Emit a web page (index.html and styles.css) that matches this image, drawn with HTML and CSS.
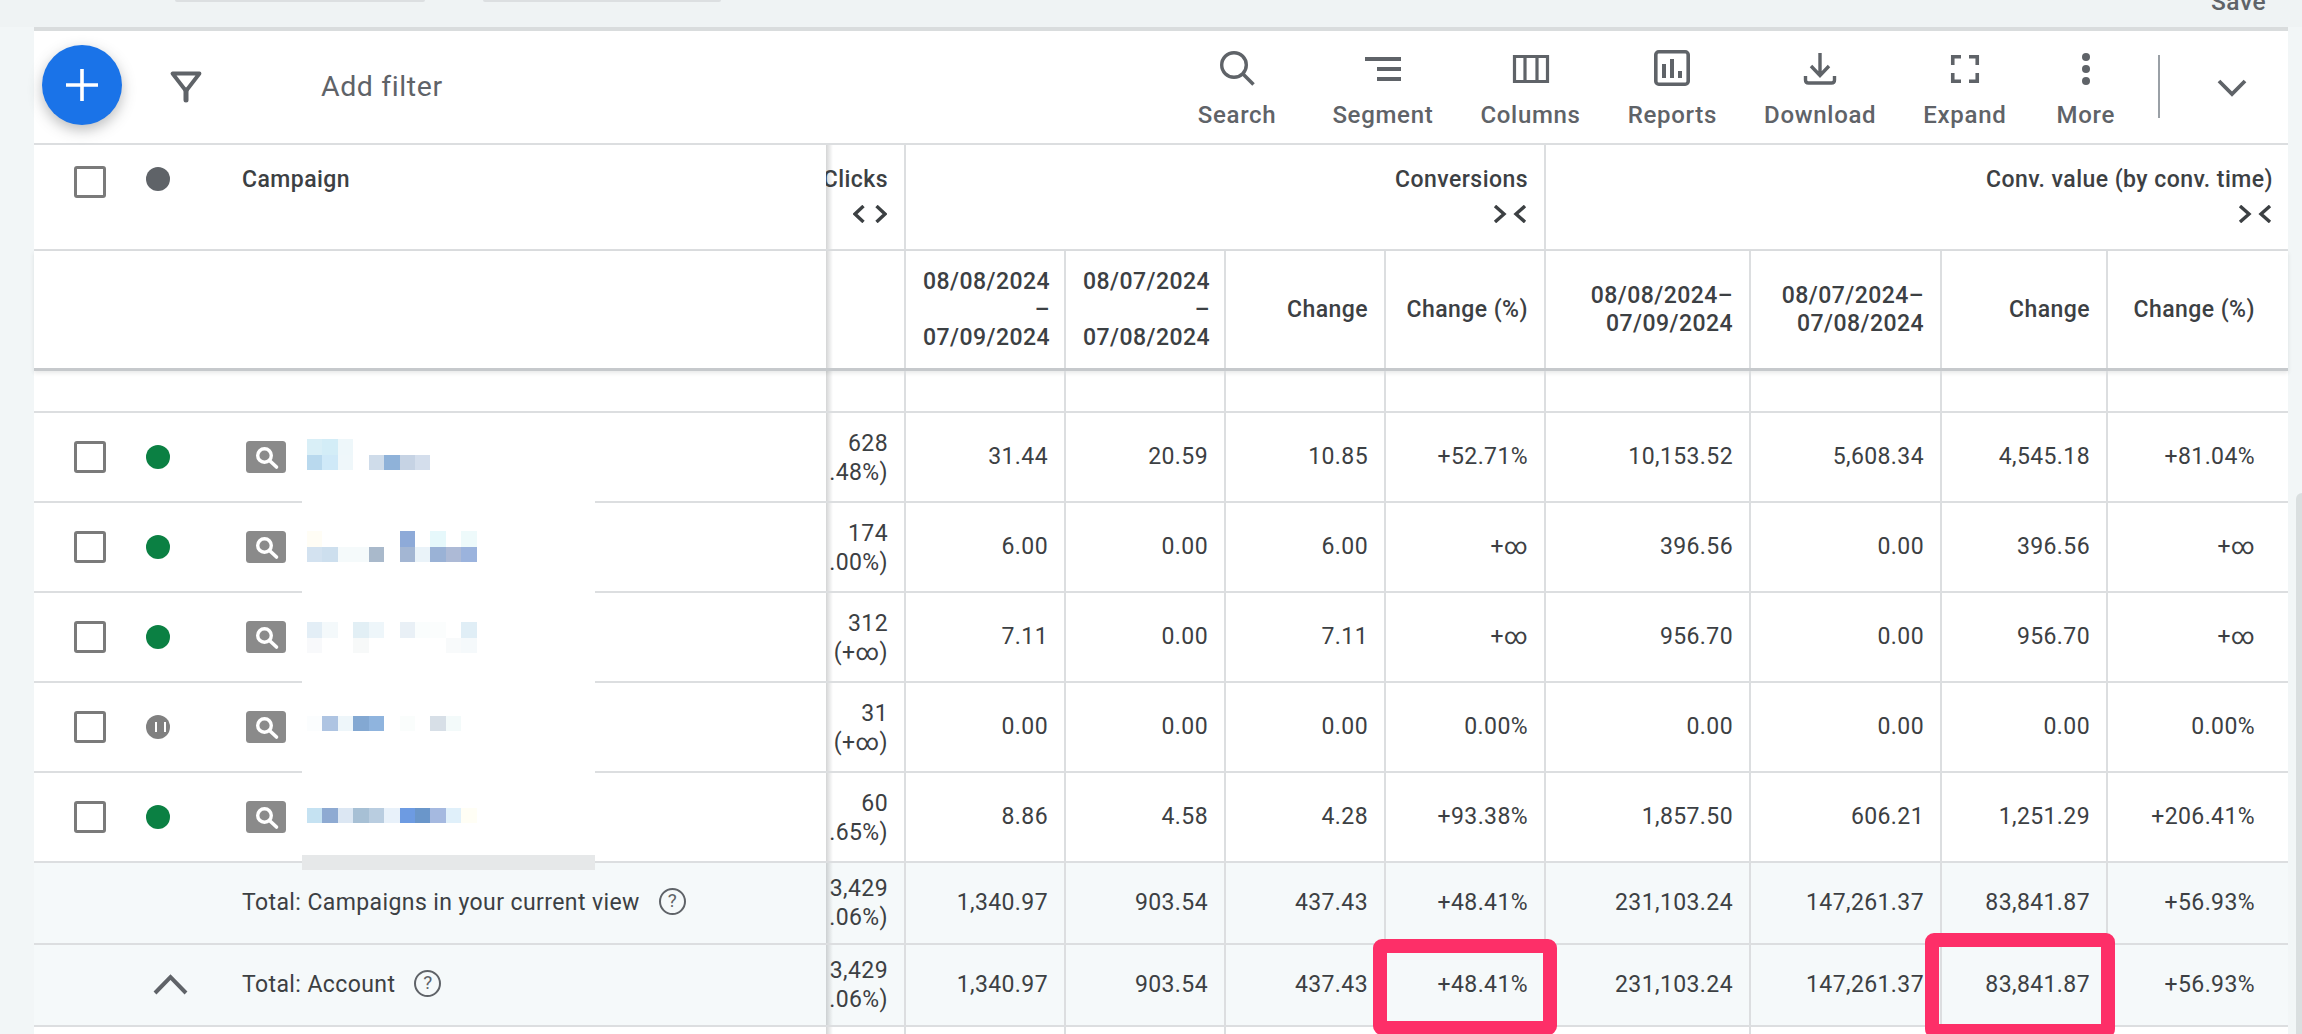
FILE: index.html
```html
<!DOCTYPE html>
<html lang="en">
<head>
<meta charset="utf-8">
<title>Campaigns</title>
<link rel="stylesheet" href="styles.css">
</head>
<body>
<svg class="sprite" width="0" height="0" aria-hidden="true">
  <symbol id="badge" viewBox="0 0 40 32">
    <rect width="40" height="32" rx="3.5" fill="#8a8a8a"/>
    <circle cx="18.5" cy="14.5" r="6.8" fill="none" stroke="#fff" stroke-width="3.4"/>
    <path d="M23.5 19.5l7 6.5" stroke="#fff" stroke-width="3.6" stroke-linecap="round" fill="none"/>
  </symbol>
  <symbol id="up" viewBox="0 0 48 24">
    <path d="M9 20L24.500 4 40 20" fill="none" stroke="#5f6368" stroke-width="4"/>
  </symbol>
</svg>

<header class="topstrip">
  <span class="chip chip-a"></span>
  <span class="chip chip-b"></span>
  <span class="save">Save</span>
</header>

<main class="card">
  <div class="toolbar">
    <button class="fab" type="button" aria-label="Add">
      <svg width="40" height="40" viewBox="0 0 40 40"><path d="M20 4v32M4 20h32" stroke="#fff" stroke-width="3.600" fill="none"/></svg>
    </button>
    <svg class="filter" width="48" height="48" viewBox="0 0 48 48"><path d="M10.500 11.500H37.500L24 29Z" fill="none" stroke="#5f6368" stroke-width="3.800" stroke-linejoin="round"/><path d="M24 28v10" stroke="#5f6368" stroke-width="5" stroke-linecap="round"/></svg>
    <span class="addfilter">Add filter</span>
    <nav class="tools">
      <div class="tool">
        <svg width="48" height="48" viewBox="0 0 48 48"><circle cx="21" cy="21" r="12.300" fill="none" stroke="#5f6368" stroke-width="3.400"/><path d="M30 30l10.500 10.500" stroke="#5f6368" stroke-width="3.600" fill="none"/></svg>
        <span>Search</span>
      </div>
      <div class="tool">
        <svg width="48" height="48" viewBox="0 0 48 48"><path d="M6 13h36v4H6zM18 23h24v4H18zM18 33h24v4H18z" fill="#5f6368"/></svg>
        <span>Segment</span>
      </div>
      <div class="tool">
        <svg width="48" height="48" viewBox="0 0 48 48"><path d="M7.500 12.500h33v25h-33zM18 12.500v25M30 12.500v25" fill="none" stroke="#5f6368" stroke-width="3.200"/></svg>
        <span>Columns</span>
      </div>
      <div class="tool">
        <svg width="48" height="48" viewBox="0 0 48 48"><rect x="7.800" y="7.800" width="32.400" height="32.400" rx="3" fill="none" stroke="#5f6368" stroke-width="3.600"/><path d="M14 20h4v14h-4zM22 15h4v19h-4zM30 27h4v7h-4z" fill="#5f6368"/></svg>
        <span>Reports</span>
      </div>
      <div class="tool">
        <svg width="48" height="48" viewBox="0 0 48 48"><path d="M24 9v22M15 22l9 9.500 9-9.500" fill="none" stroke="#5f6368" stroke-width="3.400"/><path d="M9.500 32v4q0 3 3 3h23q3 0 3-3v-4" fill="none" stroke="#5f6368" stroke-width="3.400"/></svg>
        <span>Download</span>
      </div>
      <div class="tool">
        <svg width="48" height="48" viewBox="0 0 48 48"><path d="M11.750 21v-8.250H20M28 12.750h8.250V21M36.250 29v8.250H28M20 37.250h-8.250V29" fill="none" stroke="#5f6368" stroke-width="3.600"/></svg>
        <span>Expand</span>
      </div>
      <div class="tool">
        <svg width="48" height="48" viewBox="0 0 48 48"><circle cx="24" cy="13" r="4" fill="#5f6368"/><circle cx="24" cy="25" r="4" fill="#5f6368"/><circle cx="24" cy="37" r="4" fill="#5f6368"/></svg>
        <span>More</span>
      </div>
    </nav>
    <span class="divider"></span>
    <svg class="chev" width="48" height="24" viewBox="0 0 48 24"><path d="M11 4l13 13L37 4" fill="none" stroke="#5f6368" stroke-width="3.800"/></svg>
  </div>

  <div class="row head1">
    <div class="st st-head">
      <span class="box"></span>
      <span class="dot dot-dark"></span>
      <span class="camp">Campaign</span>
    </div>
    <div class="c hcol"><span>Clicks</span>
      <svg width="34" height="18" viewBox="0 0 34 18"><path d="M10.500 1L2 9l8.500 8M23.500 1L32 9l-8.500 8" fill="none" stroke="#3c4043" stroke-width="3.400"/></svg>
    </div>
    <div class="c hcol span4"><span>Conversions</span>
      <svg width="34" height="18" viewBox="0 0 34 18"><path d="M2 1l9 8-9 8M32 1l-9 8 9 8" fill="none" stroke="#3c4043" stroke-width="3.400"/></svg>
    </div>
    <div class="c hcol span4 last"><span>Conv. value (by conv. time)</span>
      <svg width="34" height="18" viewBox="0 0 34 18"><path d="M2 1l9 8-9 8M32 1l-9 8 9 8" fill="none" stroke="#3c4043" stroke-width="3.400"/></svg>
    </div>
  </div>

  <div class="row head2">
    <div class="st"></div>
    <div class="c"></div>
    <div class="c hd-date">08/08/2024<br>–<br>07/09/2024</div>
    <div class="c hd-date">08/07/2024<br>–<br>07/08/2024</div>
    <div class="c">Change</div>
    <div class="c">Change (%)</div>
    <div class="c">08/08/2024–<br>07/09/2024</div>
    <div class="c">08/07/2024–<br>07/08/2024</div>
    <div class="c">Change</div>
    <div class="c last">Change (%)</div>
  </div>

  <div class="row blank">
    <div class="st"></div><div class="c"></div><div class="c"></div><div class="c"></div><div class="c"></div><div class="c"></div><div class="c"></div><div class="c"></div><div class="c"></div><div class="c last"></div>
  </div>

  <div class="row data">
    <div class="st">
      <span class="box"></span><span class="dot dot-on"></span>
      <svg class="badge" width="40" height="32"><use href="#badge"/></svg>
      <svg class="nm nm1" width="185" height="31" viewBox="0 0 12 2" preserveAspectRatio="none" shape-rendering="crispEdges">
        <rect x="0" y="0" width="1" height="1" fill="#d9eff7"/><rect x="1" y="0" width="1" height="1" fill="#d3edf7"/><rect x="2" y="0" width="1" height="1" fill="#eef7fa"/>
        <rect x="0" y="1" width="1" height="1" fill="#b9d9ee"/><rect x="1" y="1" width="1" height="1" fill="#cfe9f8"/><rect x="2" y="1" width="1" height="1" fill="#eff7fa"/><rect x="4" y="1" width="1" height="1" fill="#cfdcea"/><rect x="5" y="1" width="1" height="1" fill="#8fb2d9"/><rect x="6" y="1" width="1" height="1" fill="#c6d3e4"/><rect x="7" y="1" width="1" height="1" fill="#d4deec"/>
      </svg>
    </div>
    <div class="c two"><span>628</span><span>.48%)</span></div>
    <div class="c">31.44</div><div class="c">20.59</div><div class="c">10.85</div><div class="c">+52.71%</div>
    <div class="c">10,153.52</div><div class="c">5,608.34</div><div class="c">4,545.18</div><div class="c last">+81.04%</div>
  </div>

  <div class="row data">
    <div class="st">
      <span class="box"></span><span class="dot dot-on"></span>
      <svg class="badge" width="40" height="32"><use href="#badge"/></svg>
      <svg class="nm nm2" width="185" height="31" viewBox="0 0 12 2" preserveAspectRatio="none" shape-rendering="crispEdges">
        <rect x="0" y="0" width="1" height="1" fill="#fffdf5"/><rect x="6" y="0" width="1" height="1" fill="#8eaad8"/><rect x="8" y="0" width="1" height="1" fill="#e6f8fb"/><rect x="10" y="0" width="1" height="1" fill="#eefafb"/>
        <rect x="0" y="1" width="1" height="1" fill="#d3e2f0"/><rect x="1" y="1" width="1" height="1" fill="#cddfee"/><rect x="2" y="1" width="1" height="1" fill="#f5fafb"/><rect x="3" y="1" width="1" height="1" fill="#f5fafb"/><rect x="4" y="1" width="1" height="1" fill="#a9b9cb"/><rect x="6" y="1" width="1" height="1" fill="#a3b6d3"/><rect x="7" y="1" width="1" height="1" fill="#eaf3f9"/><rect x="8" y="1" width="1" height="1" fill="#9ab2d6"/><rect x="9" y="1" width="1" height="1" fill="#adbad6"/><rect x="10" y="1" width="1" height="1" fill="#9bb3dd"/>
      </svg>
    </div>
    <div class="c two"><span>174</span><span>.00%)</span></div>
    <div class="c">6.00</div><div class="c">0.00</div><div class="c">6.00</div><div class="c">+∞</div>
    <div class="c">396.56</div><div class="c">0.00</div><div class="c">396.56</div><div class="c last">+∞</div>
  </div>

  <div class="row data">
    <div class="st">
      <span class="box"></span><span class="dot dot-on"></span>
      <svg class="badge" width="40" height="32"><use href="#badge"/></svg>
      <svg class="nm nm3" width="185" height="31" viewBox="0 0 12 2" preserveAspectRatio="none" shape-rendering="crispEdges">
        <rect x="0" y="0" width="1" height="1" fill="#e3eef6"/><rect x="1" y="0" width="1" height="1" fill="#f4f9fb"/><rect x="3" y="0" width="1" height="1" fill="#e2eff5"/><rect x="4" y="0" width="1" height="1" fill="#eef6fa"/><rect x="6" y="0" width="1" height="1" fill="#e9f0f6"/><rect x="7" y="0" width="1" height="1" fill="#fafdfd"/><rect x="8" y="0" width="1" height="1" fill="#fbfdfd"/><rect x="10" y="0" width="1" height="1" fill="#e0eef6"/>
        <rect x="0" y="1" width="1" height="1" fill="#f8f9fb"/><rect x="3" y="1" width="1" height="1" fill="#f7f9f9"/><rect x="9" y="1" width="1" height="1" fill="#f8fafb"/><rect x="10" y="1" width="1" height="1" fill="#f5f9fb"/>
      </svg>
    </div>
    <div class="c two"><span>312</span><span>(+∞)</span></div>
    <div class="c">7.11</div><div class="c">0.00</div><div class="c">7.11</div><div class="c">+∞</div>
    <div class="c">956.70</div><div class="c">0.00</div><div class="c">956.70</div><div class="c last">+∞</div>
  </div>

  <div class="row data">
    <div class="st">
      <span class="box"></span><span class="dot dot-pause"></span>
      <svg class="badge" width="40" height="32"><use href="#badge"/></svg>
      <svg class="nm nm4" width="185" height="15" viewBox="0 0 12 1" preserveAspectRatio="none" shape-rendering="crispEdges">
        <rect x="0" y="0" width="1" height="1" fill="#fbfdfe"/><rect x="1" y="0" width="1" height="1" fill="#aec4e2"/><rect x="2" y="0" width="1" height="1" fill="#eef6fa"/><rect x="3" y="0" width="1" height="1" fill="#83a8d2"/><rect x="4" y="0" width="1" height="1" fill="#8fb4de"/><rect x="6" y="0" width="1" height="1" fill="#fafdfc"/><rect x="8" y="0" width="1" height="1" fill="#d7dfe7"/><rect x="9" y="0" width="1" height="1" fill="#f3fafa"/>
      </svg>
    </div>
    <div class="c two"><span>31</span><span>(+∞)</span></div>
    <div class="c">0.00</div><div class="c">0.00</div><div class="c">0.00</div><div class="c">0.00%</div>
    <div class="c">0.00</div><div class="c">0.00</div><div class="c">0.00</div><div class="c last">0.00%</div>
  </div>

  <div class="row data">
    <div class="st">
      <span class="box"></span><span class="dot dot-on"></span>
      <svg class="badge" width="40" height="32"><use href="#badge"/></svg>
      <svg class="nm nm5" width="185" height="15" viewBox="0 0 12 1" preserveAspectRatio="none" shape-rendering="crispEdges">
        <rect x="0" y="0" width="1" height="1" fill="#c5e2f2"/><rect x="1" y="0" width="1" height="1" fill="#8eaad2"/><rect x="2" y="0" width="1" height="1" fill="#dce7f3"/><rect x="3" y="0" width="1" height="1" fill="#a7c0d5"/><rect x="4" y="0" width="1" height="1" fill="#b9cde0"/><rect x="5" y="0" width="1" height="1" fill="#e8f1fa"/><rect x="6" y="0" width="1" height="1" fill="#6d9be2"/><rect x="7" y="0" width="1" height="1" fill="#6a96ca"/><rect x="8" y="0" width="1" height="1" fill="#a5b9e0"/><rect x="9" y="0" width="1" height="1" fill="#e0f0fa"/><rect x="10" y="0" width="1" height="1" fill="#fffef5"/>
      </svg>
    </div>
    <div class="c two"><span>60</span><span>.65%)</span></div>
    <div class="c">8.86</div><div class="c">4.58</div><div class="c">4.28</div><div class="c">+93.38%</div>
    <div class="c">1,857.50</div><div class="c">606.21</div><div class="c">1,251.29</div><div class="c last">+206.41%</div>
  </div>

  <div class="row total">
    <div class="st st-total">
      <span class="slot"></span>
      <span class="tname">Total: Campaigns in your current view</span><span class="help">?</span>
    </div>
    <div class="c two"><span>3,429</span><span>.06%)</span></div>
    <div class="c">1,340.97</div><div class="c">903.54</div><div class="c">437.43</div><div class="c">+48.41%</div>
    <div class="c">231,103.24</div><div class="c">147,261.37</div><div class="c">83,841.87</div><div class="c last">+56.93%</div>
  </div>

  <div class="row total">
    <div class="st st-total">
      <span class="slot"><svg width="48" height="24"><use href="#up"/></svg></span>
      <span class="tname">Total: Account</span><span class="help">?</span>
    </div>
    <div class="c two"><span>3,429</span><span>.06%)</span></div>
    <div class="c">1,340.97</div><div class="c">903.54</div><div class="c">437.43</div><div class="c">+48.41%</div>
    <div class="c">231,103.24</div><div class="c">147,261.37</div><div class="c">83,841.87</div><div class="c last">+56.93%</div>
  </div>

  <div class="row tail">
    <div class="st"></div><div class="c"></div><div class="c"></div><div class="c"></div><div class="c"></div><div class="c"></div><div class="c"></div><div class="c"></div><div class="c"></div><div class="c last"></div>
  </div>

  <div class="mask"></div>
  <div class="maskbar"></div>
</main>

<span class="thumb"></span>
<span class="mark mark-a"></span>
<span class="mark mark-b"></span>
</body>
</html>
```

FILE: styles.css
```css
* { box-sizing: border-box; }
html, body { margin: 0; height: 1034px; overflow: hidden; }
body {
  position: relative;
  background: #f2f6f7;
  font-family: Roboto, "Liberation Sans", sans-serif;
  color: #3c4043;
}
.sprite { position: absolute; }

.topstrip {
  height: 27px;
  background: #eff3f4;
  display: flex;
  align-items: flex-start;
  padding-left: 175px;
  padding-right: 36px;
}
.chip { height: 2px; background: #dcdfe1; border-radius: 0 0 4px 4px; }
.chip-a { width: 250px; }
.chip-b { width: 238px; margin-left: 58px; }
.save {
  margin-left: auto;
  margin-top: -12px;
  font-size: 24.500px;
  line-height: 28px;
  font-weight: 500;
  letter-spacing: .5px;
  color: #5f6368;
}

.card {
  position: relative;
  margin-left: 34px;
  width: 2254px;
  background: #fff;
  border-top: 4px solid #d9dcdd;
}

.toolbar {
  height: 114px;
  border-bottom: 2px solid #dcdee0;
  display: flex;
  align-items: flex-start;
  padding-left: 8px;
  padding-top: 13px;
}
.fab {
  width: 80px;
  height: 80px;
  margin-top: 1px;
  padding: 0;
  border: 0;
  border-radius: 50%;
  background: #1a73e8;
  box-shadow: 0 5px 14px rgba(60, 64, 67, .35);
  display: flex;
  align-items: center;
  justify-content: center;
}
.filter { margin-left: 40px; margin-top: 18px; flex: none; }
.addfilter {
  margin-left: 111px;
  margin-top: 27px;
  font-size: 28.500px;
  line-height: 32px;
  letter-spacing: .6px;
  color: #5f6368;
}
.tools { margin-left: auto; display: flex; gap: 47px; }
.tool {
  display: flex;
  flex-direction: column;
  align-items: center;
  font-size: 24px;
  font-weight: 500;
  letter-spacing: .7px;
  line-height: 28px;
  color: #5f6368;
}
.tool:first-child { margin-right: 9px; }
.tool:last-child { margin-left: 3px; }
.tool svg { display: block; margin-bottom: 9px; }
.divider {
  width: 2px;
  height: 63px;
  margin-top: 11px;
  margin-left: 43px;
  background: #9aa0a6;
}
.chev { margin-left: 48px; margin-top: 33px; margin-right: 32px; flex: none; }

.row {
  display: grid;
  grid-template-columns: 792px 80px 160px 160px 160px 160px 205px 191px 166px 180px;
  border-bottom: 2px solid #dcdee0;
  font-size: 23px;
  letter-spacing: .4px;
  line-height: 28px;
}
.head1 { height: 106px; font-weight: 500; letter-spacing: .45px; }
.head2 {
  height: 120px;
  font-weight: 500;
  letter-spacing: .45px;
  border-bottom: 3px solid #c6c9cc;
  box-shadow: 0 2px 4px rgba(60, 64, 67, .12);
}
.blank { height: 42px; }
.data { height: 90px; }
.total { height: 82px; background: #f5f9fa; }
.tail { height: 20px; border-bottom: 0; }

.st {
  display: flex;
  align-items: center;
  padding-left: 40px;
  position: relative;
}
.st::after {
  content: "";
  position: absolute;
  top: 0;
  bottom: 0;
  right: -7px;
  width: 7px;
  background: linear-gradient(to right, rgba(60, 64, 67, .22), rgba(60, 64, 67, 0));
}
.st-head { align-items: flex-start; padding-top: 21px; }
.st-total { padding-left: 112px; }

.c {
  border-right: 2px solid #dcdee0;
  padding-right: 16px;
  display: flex;
  align-items: center;
  justify-content: flex-end;
  text-align: right;
  overflow: hidden;
  white-space: nowrap;
}
.last { border-right: 0; padding-right: 33px; }
.hd-date { padding-right: 14px; }
.hcol {
  flex-direction: column;
  align-items: flex-end;
  justify-content: flex-start;
  padding-top: 21px;
}
.hcol svg { display: block; margin-top: 11px; margin-right: 1px; }
.hcol.last { padding-right: 15px; }
.span4 { grid-column: span 4; }
.two { flex-direction: column; align-items: flex-end; justify-content: center; line-height: 29px; }
.data .two { padding-top: 2px; }

.box {
  width: 32px;
  height: 32px;
  flex: none;
  border: 3.500px solid #7a7a7a;
  border-radius: 3px;
  background: #fff;
}
.dot {
  width: 24px;
  height: 24px;
  flex: none;
  border-radius: 50%;
  margin-left: 40px;
  position: relative;
}
.dot-dark { background: #5f6368; margin-top: 1px; }
.dot-on { background: #0b8043; }
.dot-pause {
  background: #808080;
}
.dot-pause::before {
  content: "";
  position: absolute;
  left: 8.500px;
  top: 7px;
  width: 7px;
  height: 10px;
  border-left: 2px solid #fff;
  border-right: 2px solid #fff;
}
.camp { margin-left: 72px; }
.badge { margin-left: 76px; flex: none; }
.nm { margin-left: 21px; align-self: flex-start; flex: none; position: relative; z-index: 2; }
.nm1 { margin-top: 26px; }
.nm2 { margin-top: 28px; }
.nm3 { margin-top: 29px; }
.nm4 { margin-top: 33px; }
.nm5 { margin-top: 35px; }

.slot { width: 96px; display: flex; flex: none; }
.slot svg { display: block; }
.tname { white-space: nowrap; }
.help {
  width: 27px;
  height: 27px;
  flex: none;
  margin-left: 19px;
  margin-top: -3px;
  border: 2.500px solid #5f6368;
  border-radius: 50%;
  font-size: 19px;
  font-weight: 400;
  line-height: 22px;
  text-align: center;
  letter-spacing: 0;
  color: #5f6368;
}

.mask {
  position: absolute;
  left: 268px;
  top: 469px;
  width: 293px;
  height: 356px;
  background: #fff;
  z-index: 1;
}
.maskbar {
  position: absolute;
  left: 268px;
  top: 824px;
  width: 293px;
  height: 15px;
  background: #e6e8e9;
  z-index: 1;
}

.thumb {
  position: absolute;
  left: 2296px;
  top: 493px;
  width: 6px;
  height: 541px;
  background: #dadfe0;
  border-radius: 6px 0 0 0;
}
.mark {
  position: absolute;
  border: 14px solid #fd2f68;
  border-radius: 9px;
  z-index: 3;
}
.mark-a { left: 1373px; top: 939px; width: 184px; height: 96px; }
.mark-b { left: 1925px; top: 933px; width: 190px; height: 105px; }
```
